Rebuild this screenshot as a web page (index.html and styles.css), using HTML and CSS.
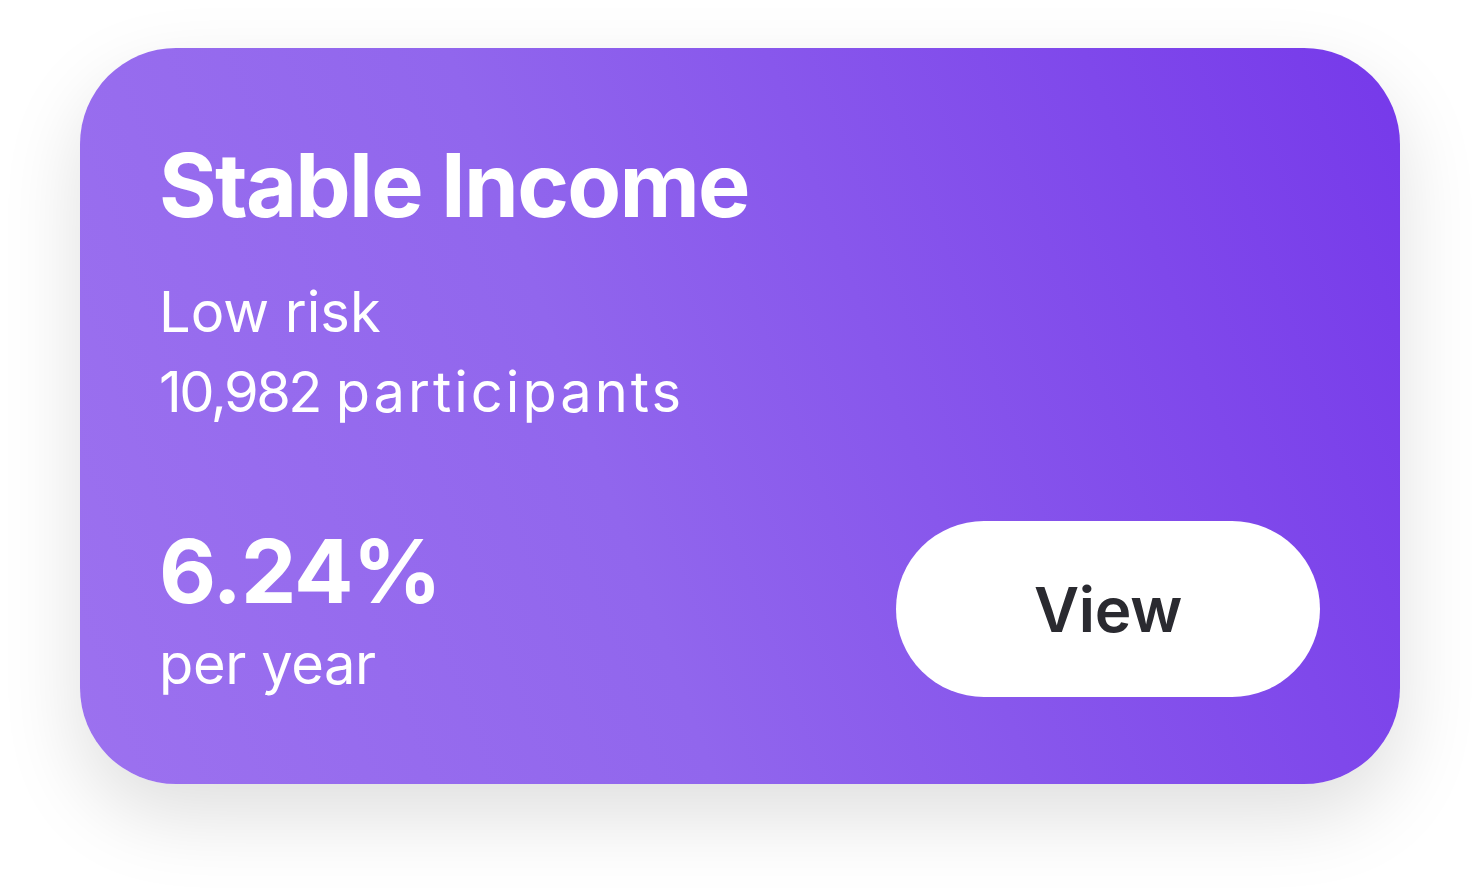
FILE: index.html
```html
<!DOCTYPE html>
<html lang="en">
<head>
<meta charset="utf-8">
<title>Stable Income</title>
<link rel="stylesheet" href="styles.css">
</head>
<body>
  <main class="stage">
    <section class="card">
      <div class="card-top">
        <h1 class="title">Stable Income</h1>
        <p class="meta">Low risk<br><span class="num">10,982</span> <span class="word">participants</span></p>
      </div>
      <div class="card-bottom">
        <div class="rate">
          <div class="rate-value">6.24%</div>
          <div class="rate-label">per year</div>
        </div>
        <button class="view-btn" type="button">View</button>
      </div>
    </section>
  </main>
</body>
</html>
```
FILE: styles.css
```css
html, body {
  margin: 0;
  padding: 0;
  background: #ffffff;
}

body {
  font-family: Inter, "Noto Sans", "Liberation Sans", sans-serif;
  color: #ffffff;
  min-height: 896px;
}

.stage {
  box-sizing: border-box;
  min-height: 896px;
  padding: 48px 80px;
}

.card {
  box-sizing: border-box;
  width: 1320px;
  height: 736px;
  border-radius: 96px;
  padding: 80px 80px 80px 79px;
  background: linear-gradient(70deg, #9c71ef 0%, #9166ed 40%, #7639ea 100%);
  box-shadow: 0 32px 80px rgba(0, 0, 0, 0.13);
  display: flex;
  flex-direction: column;
  justify-content: space-between;
}

.title {
  margin: 0;
  font-size: 88px;
  line-height: 114px;
  font-weight: 700;
  letter-spacing: -1.7px;
}

.meta {
  margin: 30px 0 0;
  font-size: 56px;
  line-height: 80px;
  font-weight: 400;
}

.num {
  letter-spacing: -2.5px;
}

.word {
  letter-spacing: 3px;
}

.card-bottom {
  display: flex;
  align-items: center;
  justify-content: space-between;
}

.rate-value {
  font-size: 88px;
  line-height: 106px;
  font-weight: 700;
  letter-spacing: -1px;
}

.rate-label {
  font-size: 56px;
  line-height: 80px;
  font-weight: 400;
  letter-spacing: -0.4px;
}

.view-btn {
  width: 424px;
  height: 176px;
  margin-bottom: 4px;
  border: none;
  border-radius: 88px;
  background: #ffffff;
  color: #2a2a30;
  font-family: Inter, "Noto Sans", "Liberation Sans", sans-serif;
  font-size: 62px;
  font-weight: 600;
  letter-spacing: -0.3px;
  cursor: pointer;
}
```
